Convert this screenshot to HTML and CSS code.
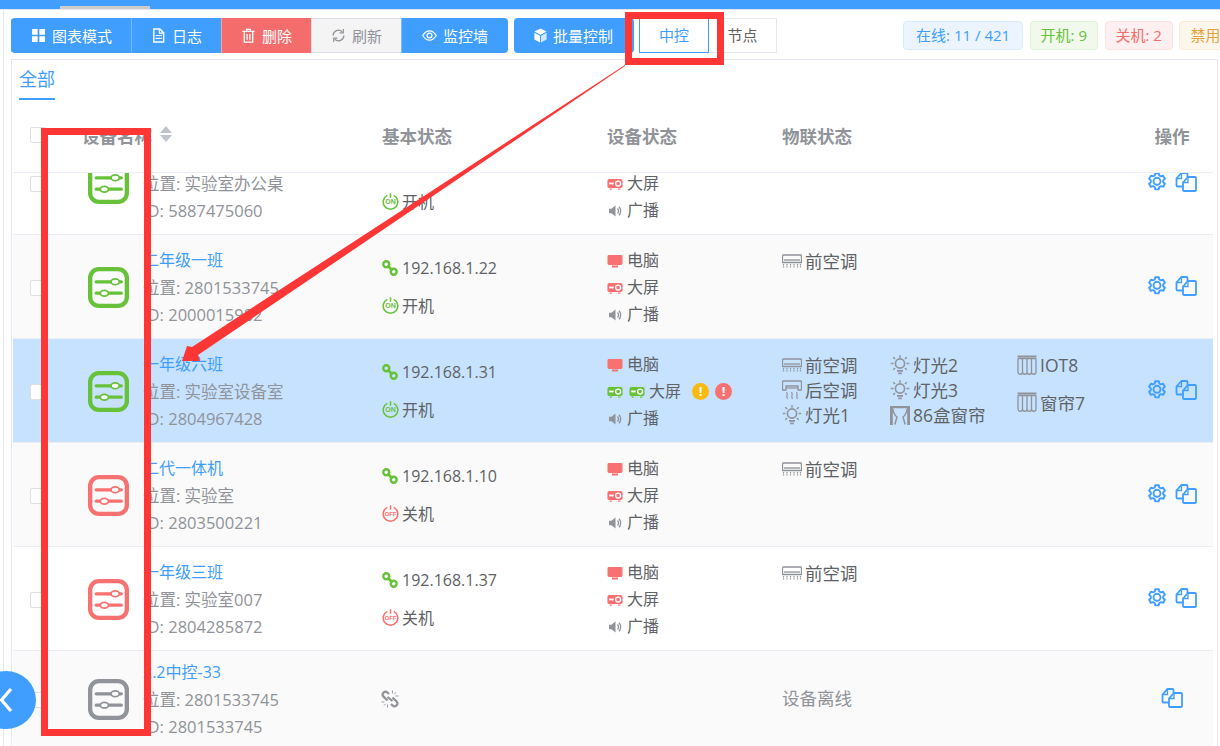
FILE: index.html
```html
<!DOCTYPE html>
<html lang="zh-CN">
<head>
  <meta charset="UTF-8" />
  <title>中控设备</title>
  <link rel="stylesheet" href="styles.css">
</head>
<body>
  <!-- icons -->
  <svg class="sprite" width="0" height="0">
    <symbol id="i-device" viewBox="0 0 40 40">
      <rect x="2.100" y="2.100" width="35.800" height="35.800" rx="8.500" fill="none" stroke="currentColor" stroke-width="4.200"/>
      <path d="M8 14.500h24.500M8 25.500h24.500" stroke="currentColor" stroke-width="3.200" stroke-linecap="round"/>
      <ellipse cx="26.500" cy="14.500" rx="4" ry="2.800" fill="#fff" stroke="currentColor" stroke-width="1.700"/>
      <ellipse cx="16" cy="25.500" rx="4" ry="2.800" fill="#fff" stroke="currentColor" stroke-width="1.700"/>
    </symbol>
    <symbol id="i-link" viewBox="0 0 16 16">
      <circle cx="4.300" cy="4.300" r="3" fill="none" stroke="currentColor" stroke-width="2.400"/>
      <circle cx="11.700" cy="11.700" r="3" fill="none" stroke="currentColor" stroke-width="2.400"/>
      <path d="M5.500 5.500l5 5" stroke="currentColor" stroke-width="2.800"/>
    </symbol>
    <symbol id="i-broken" viewBox="0 0 18 18">
      <path d="M8 4L6.500 2.600a2.800 2.800 0 0 0-4 4L6.500 10.500M10 14l1.500 1.400a2.800 2.800 0 0 0 4-4L11.500 7.500M6.500 7l5 4" fill="none" stroke="currentColor" stroke-width="2.200"/>
      <path d="M11.500 .5v3M15 2.500l-1.700 1.700M17.500 6h-3M.5 12h3M3 15.500l1.700-1.700M6.500 17.500v-3" stroke="currentColor" stroke-width=".9"/>
    </symbol>
    <symbol id="i-screen" viewBox="0 0 16 16">
      <rect x="0.500" y="2" width="15" height="10" rx="1.400" fill="currentColor"/>
      <rect x="5" y="12.500" width="6" height="2" fill="currentColor"/>
    </symbol>
    <symbol id="i-projector" viewBox="0 0 18 14">
      <rect x="0.500" y="1.500" width="17" height="10" rx="2" fill="currentColor"/>
      <rect x="2.500" y="5.400" width="5" height="2" fill="#fff"/>
      <circle cx="12.500" cy="6.500" r="2.800" fill="none" stroke="#fff" stroke-width="1.500"/>
      <path d="M3 12h2.500v1.500H3zM12.500 12H15v1.500h-2.500z" fill="currentColor"/>
    </symbol>
    <symbol id="i-sound" viewBox="0 0 16 16">
      <path d="M2 5.800h2.500L8.500 2.500v11L4.500 10.200H2z" fill="currentColor"/>
      <path d="M10.500 5.500a3.500 3.500 0 0 1 0 5M12 3.800a6 6 0 0 1 0 8.400" fill="none" stroke="currentColor" stroke-width="1.300"/>
    </symbol>
    <symbol id="i-ac" viewBox="0 0 20 14">
      <path d="M1.500 1h17a1 1 0 0 1 1 1v6.500H.5V2a1 1 0 0 1 1-1z" fill="none" stroke="currentColor" stroke-width="1.300"/>
      <path d="M2 6h16" stroke="currentColor" stroke-width="1.300"/>
      <path d="M1.500 10v3.500M5 10v3.500M8.500 10v3.500M12 10v3.500M15.500 10v3.500M18.500 10v3.500" stroke="currentColor" stroke-width="1.200" stroke-dasharray="1.500 .8"/>
    </symbol>
    <symbol id="i-heat" viewBox="0 0 20 20">
      <path d="M1.500 1h17a1 1 0 0 1 1 1v8h-3.500V6H4v4H.5V2a1 1 0 0 1 1-1z" fill="none" stroke="currentColor" stroke-width="1.300"/>
      <path d="M4 8h12" stroke="currentColor" stroke-width="1.200"/>
      <path d="M5 12c-1 1.300 1 2.200 0 3.500s1 2 0 3.500M10 12c-1 1.300 1 2.200 0 3.500s1 2 0 3.500M15 12c-1 1.300 1 2.200 0 3.500s1 2 0 3.500" fill="none" stroke="currentColor" stroke-width="1.200"/>
    </symbol>
    <symbol id="i-light" viewBox="0 0 20 20">
      <circle cx="10" cy="8.500" r="4.600" fill="none" stroke="currentColor" stroke-width="1.600"/>
      <path d="M10 .3v2.400M3.300 2.300l1.800 1.700M16.700 2.300L14.900 4M.8 8.500h2.600M16.600 8.500h2.600M3.300 14.700l1.800-1.700M16.700 14.700L14.900 13" stroke="currentColor" stroke-width="1.500"/>
      <path d="M7 15h6v1.800H7zM8.200 17.500h3.600v1.800H8.200z" fill="currentColor"/>
    </symbol>
    <symbol id="i-curtain" viewBox="0 0 20 20">
      <path d="M.5 1.500h19" stroke="currentColor" stroke-width="2"/>
      <path d="M1 3.500h18M1 3.500V17a2.200 2.200 0 0 0 4.500 0V3.500M5.500 17a2.200 2.200 0 0 0 4.500 0V3.500M10 17a2.200 2.200 0 0 0 4.500 0V3.500M14.500 17a2.200 2.200 0 0 0 4.500 0V3.500" fill="none" stroke="currentColor" stroke-width="1.300"/>
    </symbol>
    <symbol id="i-drape" viewBox="0 0 20 20">
      <path d="M0 1h20v2.300H0zM0 3.300h2.800V20H0zM17.200 3.300H20V20h-2.800z" fill="currentColor"/>
      <path d="M2.800 3.500c.5 4 2 7 4.200 8.500l-2.200 7.500M17.200 3.500c-.5 4-2 7-4.200 8.500l2.200 7.500" fill="none" stroke="currentColor" stroke-width="1.500"/>
    </symbol>
    <symbol id="i-gear" viewBox="0 0 20 20">
      <path d="M8.200 1.200h3.600l.5 2.300 1.600.9 2.200-.7 1.800 3.100-1.700 1.600v1.800l1.700 1.600-1.800 3.100-2.200-.7-1.600.9-.5 2.300H8.200l-.5-2.300-1.600-.9-2.200.7-1.800-3.100 1.700-1.600V8.400L2.100 6.800l1.800-3.100 2.200.7 1.600-.9z" fill="none" stroke="currentColor" stroke-width="1.900" stroke-linejoin="round"/>
      <circle cx="10" cy="9.300" r="3.500" fill="none" stroke="currentColor" stroke-width="1.900"/>
    </symbol>
    <symbol id="i-copy" viewBox="0 0 22 20">
      <path d="M8 14.500H2.500a1 1 0 0 1-1-1V6.500L6.500 1h5a1 1 0 0 1 1 1v3" fill="none" stroke="currentColor" stroke-width="1.800"/>
      <path d="M9 19a1 1 0 0 1-1-1v-7.500L13 5h7a1 1 0 0 1 1 1v12a1 1 0 0 1-1 1z" fill="none" stroke="currentColor" stroke-width="1.800"/>
      <path d="M1.500 6.500h5v-5M8 10.500h5v-5" fill="none" stroke="currentColor" stroke-width="1.300"/>
    </symbol>
    <symbol id="i-grid" viewBox="0 0 14 14">
      <path d="M1 1h5.200v5.200H1zM7.800 1H13v5.200H7.800zM1 7.800h5.200V13H1zM7.800 7.800H13V13H7.800z" fill="currentColor"/>
    </symbol>
    <symbol id="i-doc" viewBox="0 0 14 16">
      <path d="M2 1h6.500L12.500 5v10H2z" fill="none" stroke="currentColor" stroke-width="1.500"/>
      <path d="M4 8h6.500M4 11h6.500M8 1.500V5.500h4" fill="none" stroke="currentColor" stroke-width="1.300"/>
    </symbol>
    <symbol id="i-trash" viewBox="0 0 14 16">
      <path d="M.5 3.500h13M5 3.500V1.500h4v2M2.500 3.500V15h9V3.500M5.500 6.500v6M8.500 6.500v6" fill="none" stroke="currentColor" stroke-width="1.400"/>
    </symbol>
    <symbol id="i-refresh" viewBox="0 0 14 14">
      <path d="M2 7a5 5 0 0 1 8.500-3.500M12 7a5 5 0 0 1-8.500 3.500" fill="none" stroke="currentColor" stroke-width="1.300"/>
      <path d="M11.500 1v3.500H8M2.500 13V9.500H6" fill="none" stroke="currentColor" stroke-width="1.100"/>
    </symbol>
    <symbol id="i-eye" viewBox="0 0 16 12">
      <path d="M.8 6C3 2.500 5.500 1 8 1s5 1.500 7.200 5C13 9.500 10.500 11 8 11S3 9.500.8 6z" fill="none" stroke="currentColor" stroke-width="1.300"/>
      <circle cx="8" cy="6" r="2.600" fill="none" stroke="currentColor" stroke-width="1.300"/>
    </symbol>
    <symbol id="i-cube" viewBox="0 0 14 16">
      <path d="M7 .5l6.500 3.300L7 7.200.5 3.800z" fill="currentColor"/>
      <path d="M.5 5L6.500 8.200V15.500L.5 12.200z" fill="currentColor"/>
      <path d="M13.500 5L7.500 8.200V15.500l6-3.300z" fill="currentColor" opacity=".75"/>
    </symbol>
    <symbol id="i-on" viewBox="0 0 17 17">
      <path d="M5.300 2.300a7.300 7.300 0 1 0 6.400 0M8.500 .3v4.400" fill="none" stroke="currentColor" stroke-width="1.500"/>
    </symbol>
  </svg>

  <div class="topbar"><div class="topbar-thumb"></div></div>

  <div class="content">
    <div class="toolbar">
      <div class="btn-group">
        <button class="btn"><svg class="btn-icon"><use href="#i-grid"/></svg>图表模式</button>
        <button class="btn"><svg class="btn-icon"><use href="#i-doc"/></svg>日志</button>
        <button class="btn btn-danger"><svg class="btn-icon"><use href="#i-trash"/></svg>删除</button>
        <button class="btn btn-off"><svg class="btn-icon"><use href="#i-refresh"/></svg>刷新</button>
        <button class="btn btn-wide"><svg class="btn-icon"><use href="#i-eye"/></svg>监控墙</button>
      </div>
      <button class="btn btn-alone"><svg class="btn-icon"><use href="#i-cube"/></svg>批量控制</button>
      <div class="radio-group">
        <span class="radio radio-on">中控</span>
        <span class="radio">节点</span>
      </div>
      <div class="tags">
        <span class="tag tag-blue">在线: 11 / 421</span>
        <span class="tag tag-green">开机: 9</span>
        <span class="tag tag-red">关机: 2</span>
        <span class="tag tag-orange">禁用: 0</span>
      </div>
    </div>

    <div class="card">
      <div class="tabs"><span class="tab">全部</span></div>

      <div class="table">
        <div class="row head">
          <div class="cell-check"><span class="checkbox"></span></div>
          <div class="head-name">设备名称<span class="sort"><i class="up"></i><i class="down"></i></span></div>
          <div>基本状态</div>
          <div>设备状态</div>
          <div>物联状态</div>
          <div class="cell-ops">操作</div>
        </div>

        <div class="rows">
          <div class="row first">
            <div class="cell-check"><span class="checkbox"></span></div>
            <div class="cell-icon"><svg class="device green"><use href="#i-device"/></svg></div>
            <div class="cell-name">
              <a>一年级二班</a>
              <p>位置: 实验室办公桌</p>
              <p>ID: 5887475060</p>
            </div>
            <div class="cell-basic">
              <p><svg class="ico green"><use href="#i-link"/></svg>192.168.1.20</p>
              <p><span class="power green"><svg><use href="#i-on"/></svg><b>ON</b></span>开机</p>
            </div>
            <div class="cell-device">
              <p><svg class="ico red"><use href="#i-screen"/></svg>电脑</p>
              <p><svg class="ico red"><use href="#i-projector"/></svg>大屏</p>
              <p><svg class="ico gray"><use href="#i-sound"/></svg>广播</p>
            </div>
            <div class="cell-iot"></div>
            <div class="cell-ops">
              <svg class="op"><use href="#i-gear"/></svg>
              <svg class="op op-copy"><use href="#i-copy"/></svg>
            </div>
          </div>

          <div class="row alt">
            <div class="cell-check"><span class="checkbox"></span></div>
            <div class="cell-icon"><svg class="device green"><use href="#i-device"/></svg></div>
            <div class="cell-name">
              <a>二年级一班</a>
              <p>位置: 2801533745</p>
              <p>ID: 2000015982</p>
            </div>
            <div class="cell-basic">
              <p><svg class="ico green"><use href="#i-link"/></svg>192.168.1.22</p>
              <p><span class="power green"><svg><use href="#i-on"/></svg><b>ON</b></span>开机</p>
            </div>
            <div class="cell-device">
              <p><svg class="ico red"><use href="#i-screen"/></svg>电脑</p>
              <p><svg class="ico red"><use href="#i-projector"/></svg>大屏</p>
              <p><svg class="ico gray"><use href="#i-sound"/></svg>广播</p>
            </div>
            <div class="cell-iot">
              <div class="iot-grid">
                <div class="iot-item"><svg class="iot-ico"><use href="#i-ac"/></svg>前空调</div>
              </div>
            </div>
            <div class="cell-ops">
              <svg class="op"><use href="#i-gear"/></svg>
              <svg class="op op-copy"><use href="#i-copy"/></svg>
            </div>
          </div>

          <div class="row selected">
            <div class="cell-check"><span class="checkbox"></span></div>
            <div class="cell-icon"><svg class="device green"><use href="#i-device"/></svg></div>
            <div class="cell-name">
              <a>一年级六班</a>
              <p>位置: 实验室设备室</p>
              <p>ID: 2804967428</p>
            </div>
            <div class="cell-basic">
              <p><svg class="ico green"><use href="#i-link"/></svg>192.168.1.31</p>
              <p><span class="power green"><svg><use href="#i-on"/></svg><b>ON</b></span>开机</p>
            </div>
            <div class="cell-device">
              <p><svg class="ico red"><use href="#i-screen"/></svg>电脑</p>
              <p>
                <svg class="ico green"><use href="#i-projector"/></svg><svg class="ico green ico-next"><use href="#i-projector"/></svg>大屏
                <span class="alert alert-warn">!</span><span class="alert alert-err">!</span>
              </p>
              <p><svg class="ico gray"><use href="#i-sound"/></svg>广播</p>
            </div>
            <div class="cell-iot">
              <div class="iot-grid">
                <div class="iot-item"><svg class="iot-ico"><use href="#i-ac"/></svg>前空调</div>
                <div class="iot-item"><svg class="iot-ico"><use href="#i-heat"/></svg>后空调</div>
                <div class="iot-item"><svg class="iot-ico"><use href="#i-light"/></svg>灯光1</div>
                <div class="iot-item"><svg class="iot-ico"><use href="#i-light"/></svg>灯光2</div>
                <div class="iot-item"><svg class="iot-ico"><use href="#i-light"/></svg>灯光3</div>
                <div class="iot-item"><svg class="iot-ico"><use href="#i-drape"/></svg>86盒窗帘</div>
                <div class="iot-item"><svg class="iot-ico"><use href="#i-curtain"/></svg>IOT8</div>
                <div class="iot-item iot-span"><svg class="iot-ico"><use href="#i-curtain"/></svg>窗帘7</div>
              </div>
            </div>
            <div class="cell-ops">
              <svg class="op"><use href="#i-gear"/></svg>
              <svg class="op op-copy"><use href="#i-copy"/></svg>
            </div>
          </div>

          <div class="row alt">
            <div class="cell-check"><span class="checkbox"></span></div>
            <div class="cell-icon"><svg class="device red"><use href="#i-device"/></svg></div>
            <div class="cell-name">
              <a>二代一体机</a>
              <p>位置: 实验室</p>
              <p>ID: 2803500221</p>
            </div>
            <div class="cell-basic">
              <p><svg class="ico green"><use href="#i-link"/></svg>192.168.1.10</p>
              <p><span class="power red"><svg><use href="#i-on"/></svg><b class="off">OFF</b></span>关机</p>
            </div>
            <div class="cell-device">
              <p><svg class="ico red"><use href="#i-screen"/></svg>电脑</p>
              <p><svg class="ico red"><use href="#i-projector"/></svg>大屏</p>
              <p><svg class="ico gray"><use href="#i-sound"/></svg>广播</p>
            </div>
            <div class="cell-iot">
              <div class="iot-grid">
                <div class="iot-item"><svg class="iot-ico"><use href="#i-ac"/></svg>前空调</div>
              </div>
            </div>
            <div class="cell-ops">
              <svg class="op"><use href="#i-gear"/></svg>
              <svg class="op op-copy"><use href="#i-copy"/></svg>
            </div>
          </div>

          <div class="row">
            <div class="cell-check"><span class="checkbox"></span></div>
            <div class="cell-icon"><svg class="device red"><use href="#i-device"/></svg></div>
            <div class="cell-name">
              <a>一年级三班</a>
              <p>位置: 实验室007</p>
              <p>ID: 2804285872</p>
            </div>
            <div class="cell-basic">
              <p><svg class="ico green"><use href="#i-link"/></svg>192.168.1.37</p>
              <p><span class="power red"><svg><use href="#i-on"/></svg><b class="off">OFF</b></span>关机</p>
            </div>
            <div class="cell-device">
              <p><svg class="ico red"><use href="#i-screen"/></svg>电脑</p>
              <p><svg class="ico red"><use href="#i-projector"/></svg>大屏</p>
              <p><svg class="ico gray"><use href="#i-sound"/></svg>广播</p>
            </div>
            <div class="cell-iot">
              <div class="iot-grid">
                <div class="iot-item"><svg class="iot-ico"><use href="#i-ac"/></svg>前空调</div>
              </div>
            </div>
            <div class="cell-ops">
              <svg class="op"><use href="#i-gear"/></svg>
              <svg class="op op-copy"><use href="#i-copy"/></svg>
            </div>
          </div>

          <div class="row alt last">
            <div class="cell-check"><span class="checkbox"></span></div>
            <div class="cell-icon"><svg class="device gray"><use href="#i-device"/></svg></div>
            <div class="cell-name">
              <a>2.2中控-33</a>
              <p>位置: 2801533745</p>
              <p>ID: 2801533745</p>
            </div>
            <div class="cell-basic cell-offline">
              <svg class="ico-broken gray"><use href="#i-broken"/></svg>
            </div>
            <div class="cell-device"></div>
            <div class="cell-iot offline">设备离线</div>
            <div class="cell-ops">
              <svg class="op op-copy"><use href="#i-copy"/></svg>
            </div>
          </div>
        </div>
      </div>
    </div>
  </div>

  <!-- 收起按钮 -->
  <div class="collapse">
    <svg width="14" height="26" viewBox="0 0 14 26"><path d="M12 2L2.500 13l9.500 11" fill="none" stroke="#fff" stroke-width="3.200"/></svg>
  </div>

  <!-- 标注 -->
  <svg class="notes" viewBox="0 0 1220 746">
    <rect x="44.500" y="131.500" width="103" height="601" fill="none" stroke="#ff3636" stroke-width="7"/>
    <rect x="628.500" y="15.500" width="92" height="46" fill="none" stroke="#ff3636" stroke-width="7"/>
    <polygon points="625,65 192,347 187,346 182,361 200,361 198,355 625,66" fill="#ff3636"/>
  </svg>
</body>
</html>
```

FILE: styles.css
```css
* {
  box-sizing: border-box;
}

html, body {
  margin: 0;
  padding: 0;
  height: 100%;
  overflow: hidden;
}

body {
  position: relative;
  background-color: #fff;
  color: #606266;
  font-family: "Open Sans", "Noto Sans CJK SC", sans-serif;
  font-size: 16px;
}

p {
  margin: 0;
}

.sprite {
  position: absolute;
}

.green { color: #67c23a; }
.red { color: #f87171; }
.gray { color: #909399; }

.topbar {
  height: 10px;
  background: linear-gradient(#409eff 9px, #e4e7ed 9px);
  padding-top: 6px;
}

.topbar-thumb {
  width: 90px;
  height: 3px;
  margin-left: 60px;
  background-color: #ccc;
}

.content {
  margin-left: 3px;
  padding: 8px 2px 0 7px;
  height: 736px;
  border-left: 1px solid #e4e7ed;
}

/* 工具栏 */
.toolbar {
  display: flex;
  align-items: flex-start;
  overflow: hidden;
  margin-right: -2px;
}

.btn-group {
  display: flex;
  flex: none;
  border-radius: 4px;
  overflow: hidden;
}

.btn {
  display: flex;
  flex: none;
  align-items: center;
  justify-content: center;
  gap: 6px;
  height: 35px;
  padding: 0 19px;
  border: none;
  border-left: 1px solid #79bbff;
  background-color: #409eff;
  color: #fff;
  font: inherit;
  font-size: 15px;
}

.btn:first-child {
  border-left-color: #409eff;
}

.btn-danger {
  border-left-color: #f9a0a0;
  background-color: #f56c6c;
}

.btn-off {
  border-left: 1px solid #dcdfe6;
  box-shadow: inset 0 1px #dcdfe6, inset 0 -1px #dcdfe6;
  background-color: #f4f4f5;
  color: #909399;
}

.btn-wide {
  padding: 0 20px;
}

.btn-alone {
  gap: 5px;
  margin-left: 6px;
  padding: 0 21px 0 18px;
  border-left-color: #409eff;
  border-radius: 4px;
}

.btn-icon {
  width: 15px;
  height: 15px;
}

.radio-group {
  display: flex;
  flex: none;
  margin-left: 5px;
}

.radio {
  width: 70px;
  height: 35px;
  line-height: 33px;
  text-align: center;
  font-size: 15px;
  border: 1px solid #e4e7ed;
}

.radio-on {
  border-color: #409eff;
  color: #409eff;
}

.radio + .radio {
  width: 68px;
  border-left: none;
}

.tags {
  display: flex;
  flex: none;
  gap: 6.500px;
  margin-left: 126px;
  margin-top: 3px;
}

.tag {
  height: 29px;
  line-height: 27px;
  padding: 0 10px;
  border: 1px solid;
  border-radius: 4px;
  font-size: 15px;
  white-space: nowrap;
}

.tag-blue { padding: 0 12px; background-color: #ecf5ff; border-color: #d9ecff; color: #409eff; }
.tag-green { background-color: #f0f9eb; border-color: #e1f3d8; color: #67c23a; }
.tag-red { background-color: #fef0f0; border-color: #fde2e2; color: #f56c6c; }
.tag-orange { background-color: #fdf6ec; border-color: #faecd8; color: #e6a23c; }

/* 表格 */
.card {
  margin-top: 6px;
  height: 700px;
  border: 1px solid #e4e7ed;
}

.tabs {
  height: 40px;
  padding: 9px 7px 0;
}

.tab {
  display: inline-block;
  height: 31px;
  line-height: 21px;
  font-size: 18px;
  color: #409eff;
  border-bottom: 2px solid #409eff;
}

.table {
  width: 1200px;
  margin-left: 1px;
}

.row {
  display: grid;
  grid-template-columns: 62px 68px 239px 225px 175px 349px 82px;
  align-items: center;
  height: 104px;
  padding-top: 2px;
  border-bottom: 1px solid #ebeef5;
  background-color: #fff;
}

.row.alt {
  background-color: #fafafa;
}

.row.selected {
  background-color: #c6e2ff;
}

.row.first {
  margin-top: -42px;
}

.row.last {
  height: 96px;
}

.row.head {
  grid-template-columns: 62px 307px 225px 175px 349px 82px;
  height: 73px;
  padding: 0 0 2px;
  font-size: 17.500px;
  font-weight: 700;
  color: #909399;
}

.rows {
  height: 573px;
  overflow: hidden;
}

.cell-check {
  padding-left: 17px;
  display: flex;
}

.checkbox {
  width: 16px;
  height: 16px;
  background-color: #fff;
  border: 1px solid #dcdfe6;
  border-radius: 2px;
}

.head-name {
  display: flex;
  align-items: center;
  padding-left: 7px;
}

.sort {
  display: inline-flex;
  flex-direction: column;
  gap: 2px;
  margin: -2px 0 0 8px;
}

.sort i {
  width: 0;
  height: 0;
  border-left: 6px solid transparent;
  border-right: 6px solid transparent;
}

.sort .up {
  border-bottom: 7px solid #c0c4cc;
}

.sort .down {
  border-top: 7px solid #c0c4cc;
}

.cell-icon {
  padding-left: 13px;
  display: flex;
}

.device {
  width: 41px;
  height: 41px;
}

.cell-name {
  line-height: 27px;
  color: #909399;
  font-size: 16.500px;
  white-space: nowrap;
}

.cell-name a {
  display: block;
  color: #409eff;
  font-size: 16px;
}

.cell-basic {
  display: flex;
  flex-direction: column;
  gap: 12px;
  padding-bottom: 2px;
  line-height: 26px;
}

.cell-basic p,
.cell-device p {
  display: flex;
  align-items: center;
  white-space: nowrap;
}

.cell-offline {
  display: block;
  line-height: 0;
}

.cell-device {
  line-height: 27px;
}

.ico {
  width: 16px;
  height: 16px;
  margin-right: 4px;
  flex: none;
}

.ico-next {
  margin-left: 2px;
}

.ico-broken {
  width: 18px;
  height: 18px;
  margin-left: -1px;
}

/* 开关机图标 */
.power {
  position: relative;
  width: 17px;
  height: 17px;
  margin-right: 3px;
  flex: none;
}

.power svg {
  display: block;
  width: 17px;
  height: 17px;
}

.power b {
  position: absolute;
  left: 0;
  right: 0;
  top: 4px;
  line-height: 10px;
  text-align: center;
  font-family: "Liberation Sans", sans-serif;
  font-size: 7px;
}

.power b.off {
  font-size: 6px;
}

.alert {
  width: 17px;
  height: 17px;
  margin-left: 6px;
  border-radius: 50%;
  color: #fff;
  font-size: 13px;
  font-weight: 700;
  line-height: 17px;
  text-align: center;
}

.alert-warn {
  margin-left: 11px;
  background-color: #fbb80f;
}

.alert-err {
  background-color: #f87171;
}

.iot-grid {
  display: grid;
  grid-auto-flow: column;
  grid-template-columns: 108px 127px 1fr;
  grid-template-rows: repeat(3, 25px);
  margin-bottom: 4px;
  font-size: 17.500px;
}

.iot-item {
  display: flex;
  align-items: center;
  gap: 3px;
  white-space: nowrap;
}

.iot-span {
  grid-row: span 2;
}

.iot-ico {
  width: 20px;
  height: 20px;
  color: #909399;
}

.offline {
  padding-bottom: 4px;
  font-size: 17.500px;
  color: #909399;
}

.cell-ops {
  display: flex;
  justify-content: center;
  align-items: center;
  gap: 8px;
  padding-bottom: 4px;
}

.head .cell-ops {
  padding-bottom: 0;
}

.op {
  width: 20px;
  height: 20px;
  color: #409eff;
}

.op-copy {
  width: 22px;
}

/* 收起按钮 */
.collapse {
  position: absolute;
  left: -24px;
  top: 671px;
  width: 60px;
  height: 58px;
  display: flex;
  align-items: center;
  justify-content: center;
  border-radius: 50%;
  background-color: #409eff;
}

.notes {
  position: absolute;
  top: 0;
  left: 0;
  width: 1220px;
  height: 746px;
  pointer-events: none;
}
```
